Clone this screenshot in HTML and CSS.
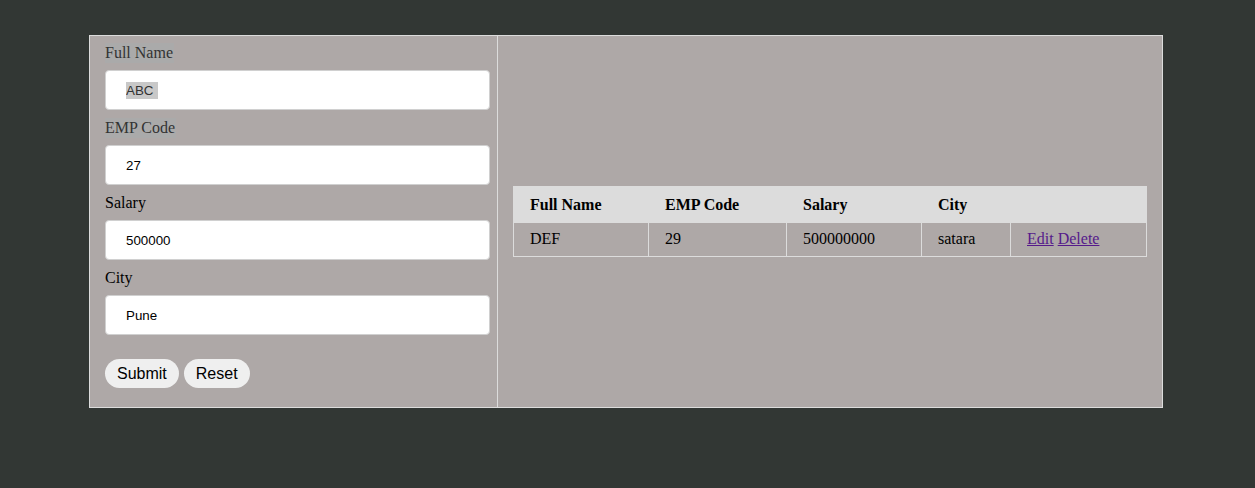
FILE: index.html
```html
<!DOCTYPE html>
<html>
<head>
<meta charset="utf-8">
<title>Employees</title>
<link rel="stylesheet" href="styles.css">
</head>
<body>
<div class="frame">
  <div class="form-cell">
    <form class="form">
      <label class="label label-hl">Full Name</label>
      <input class="input input-sel" type="text" value="ABC">
      <label class="label label-hl">EMP Code</label>
      <input class="input" type="text" value="27">
      <label class="label">Salary</label>
      <input class="input" type="text" value="500000">
      <label class="label">City</label>
      <input class="input" type="text" value="Pune">
      <div class="actions">
        <button type="button" class="btn">Submit</button>
        <button type="button" class="btn">Reset</button>
      </div>
    </form>
  </div>
  <div class="list-cell">
    <table class="list">
      <thead>
        <tr>
          <th class="c1">Full Name</th>
          <th class="c2">EMP Code</th>
          <th class="c3">Salary</th>
          <th class="c4">City</th>
          <th class="c5"></th>
        </tr>
      </thead>
      <tbody>
        <tr>
          <td>DEF</td>
          <td>29</td>
          <td>500000000</td>
          <td>satara</td>
          <td><a href="#" class="lnk">Edit</a> <a href="#" class="lnk">Delete</a></td>
        </tr>
      </tbody>
    </table>
  </div>
</div>
</body>
</html>
```

FILE: styles.css
```css
html, body {
  margin: 0;
  padding: 0;
}
body {
  background: #323734;
  font-family: "Liberation Serif", "Times New Roman", serif;
  font-size: 16px;
  color: #000;
}
.frame {
  display: flex;
  width: 1072px;
  height: 371px;
  margin: 35px 0 0 89px;
  border: 1px solid #dcdcdc;
  background: #aea8a7;
}
.form-cell {
  width: 392px;
  flex: none;
  padding: 7px 0 0 15px;
  border-right: 1px solid #dcdcdc;
}
.form {
  display: flex;
  flex-direction: column;
  align-items: flex-start;
}
.label {
  display: block;
  height: 20px;
  line-height: 20px;
  font-size: 16px;
  margin-bottom: 7px;
}
.label-hl {
  background: #aaaaaa;
  color: #333;
  padding-right: 1px;
}
.input {
  box-sizing: border-box;
  width: 385px;
  height: 40px;
  margin: 0 0 8px 0;
  padding: 0 0 0 20px;
  border: 1px solid #d0d0d0;
  border-radius: 4px;
  background: #fff;
  font-family: "Liberation Sans", Arial, sans-serif;
  font-size: 13.33px;
  color: #000;
  outline: none;
}
.input-sel {
  color: #333;
  background: linear-gradient(#c8c8c8, #c8c8c8) no-repeat 20px 11px / 32px 17px, #fff;
}
.actions {
  display: flex;
  gap: 5px;
  margin-top: 16px;
}
.btn {
  height: 29px;
  padding: 0 12px;
  border: none;
  border-radius: 15px;
  background: #efefef;
  font-family: "Liberation Sans", Arial, sans-serif;
  font-size: 16px;
  color: #000;
}
.list-cell {
  flex: 1;
  display: flex;
  align-items: center;
  padding: 0 15px;
}
.list {
  width: 634px;
  table-layout: fixed;
  border-collapse: collapse;
  border: 1px solid #dcdcdc;
}
.list th, .list td {
  border: 1px solid #dcdcdc;
  text-align: left;
  line-height: 18px;
  padding: 8px 16px;
  white-space: nowrap;
}
.list th {
  background: #dcdcdc;
  font-weight: bold;
  padding-top: 9px;
  padding-bottom: 8px;
}
.list td {
  padding-top: 7px;
  padding-bottom: 8px;
}
.c1 { width: 102px; }
.c2 { width: 105px; }
.c3 { width: 102px; }
.c4 { width: 56px; }
.lnk {
  color: #551a8b;
}
```
